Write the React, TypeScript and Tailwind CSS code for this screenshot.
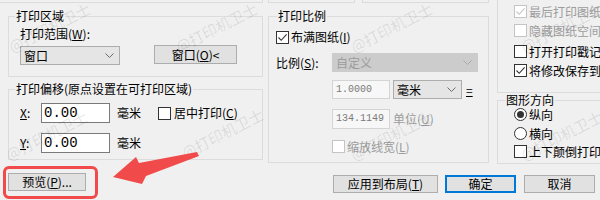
import React from 'react';

const WATERMARKS: [number, number][] = [
  [13, 54], [180, 54], [355, 54], [525, 54],
  [10, 162], [186, 160], [355, 162], [525, 162],
];

function Chevron({ color = '#6b6b6b' }: { color?: string }) {
  return (
    <svg width="9" height="5" viewBox="0 0 9 5" className="shrink-0">
      <path d="M0.5 0.5 L4.5 4.5 L8.5 0.5" fill="none" stroke={color} strokeWidth="1" />
    </svg>
  );
}

function Check({ checked, disabled }: { checked?: boolean; disabled?: boolean }) {
  return (
    <span
      className={`flex h-[13px] w-[13px] shrink-0 items-center justify-center border bg-white ${
        disabled ? 'border-[#c4c4c4]' : 'border-[#333333]'
      }`}
    >
      {checked && (
        <svg width="11" height="11" viewBox="0 0 11 11">
          <path
            d="M1.5 5.5 L4.2 8.3 L9.6 2.4"
            fill="none"
            stroke={disabled ? '#c4c4c4' : '#333333'}
            strokeWidth="1.1"
          />
        </svg>
      )}
    </span>
  );
}

function Radio({ selected }: { selected?: boolean }) {
  return (
    <span className="flex h-[13px] w-[13px] shrink-0 items-center justify-center rounded-full border border-[#333333] bg-white">
      {selected && <span className="h-[7px] w-[7px] rounded-full bg-[#333333]" />}
    </span>
  );
}

function Combo({ text, className, disabled }: { text: string; className: string; disabled?: boolean }) {
  return (
    <div
      className={`flex items-center justify-between border pl-[3px] pr-[5px] ${
        disabled ? 'border-[#cccccc] bg-[#cccccc] text-[#9c9c9c]' : 'border-[#adadad] bg-[#e5e5e5]'
      } ${className}`}
    >
      <span>{text}</span>
      <Chevron color={disabled ? '#a9a9a9' : '#6b6b6b'} />
    </div>
  );
}

function Field({ value, className, disabled }: { value: string; className: string; disabled?: boolean }) {
  return (
    <div
      className={`flex items-center border font-['Liberation_Mono',monospace] ${
        disabled
          ? 'border-[#d4d4d4] bg-[#f7f7f7] pl-[3px] text-[10px] text-[#7a7a7a]'
          : 'border-[#7a7a7a] bg-white pl-[2px] text-[14px]'
      } ${className}`}
    >
      {value}
    </div>
  );
}

export default function App() {
  return (
    <div className="relative h-[200px] w-[600px] overflow-hidden bg-[#f0f0f0] font-['Noto_Sans_CJK_SC','Noto_Sans',sans-serif] text-[12px] leading-[14px] text-black">
      <div className="flex h-[164px]">
        {/* left column */}
        <div className="w-[263px] shrink-0">
          <div className="h-[3px] border-b border-r border-[#dcdcdc]" />

          <fieldset className="ml-2 mt-[6px] h-[68px] border border-[#dcdcdc]">
            <legend className="ml-[6px] px-[1px]">打印区域</legend>
            <div className="pl-[11px] pt-[4px]">
              打印范围(<u>W</u>):
            </div>
            <div className="mt-[4px] flex items-start pl-[11px]">
              <Combo text="窗口" className="mt-[1px] h-[19px] w-[100px]" />
              <button className="ml-[34px] h-[19px] w-[83px] border border-[#adadad] bg-[#e1e1e1]">
                窗口(<u>O</u>)&lt;
              </button>
            </div>
          </fieldset>

          <fieldset className="ml-2 mt-[5px] h-[78px] border border-[#dcdcdc]">
            <legend className="ml-[6px] px-[1px]">打印偏移(原点设置在可打印区域)</legend>
            <div className="mt-[7px] flex h-[20px] items-center pl-[11px]">
              <span className="w-[21px]">
                <u>X</u>:
              </span>
              <Field value="0.00" className="h-[20px] w-[69px]" />
              <span className="ml-[7px]">毫米</span>
              <span className="ml-[17px] flex items-center">
                <Check />
                <span className="ml-[3px]">
                  居中打印(<u>C</u>)
                </span>
              </span>
            </div>
            <div className="mt-[10px] flex h-[20px] items-center pl-[11px]">
              <span className="w-[21px]">
                <u>Y</u>:
              </span>
              <Field value="0.00" className="h-[20px] w-[69px]" />
              <span className="ml-[7px]">毫米</span>
            </div>
          </fieldset>
        </div>

        {/* middle column */}
        <div className="ml-[5px] w-[221px] shrink-0">
          <div className="flex h-[3px]">
            <div className="w-[87px] border-b border-l border-r border-[#dcdcdc]" />
            <div className="ml-[7px] w-[127px] border-b border-l border-r border-[#dcdcdc]" />
          </div>

          <fieldset className="mt-[6px] h-[154px] border border-[#dcdcdc]">
            <legend className="ml-[8px] px-[1px]">打印比例</legend>
            <div className="mt-[7px] flex h-[14px] items-center pl-[7px]">
              <Check checked />
              <span className="ml-[2px]">
                布满图纸(<u>I</u>)
              </span>
            </div>
            <div className="mt-[9px] flex h-[19px] items-center pl-[7px]">
              <span className="w-[56px]">
                比例(<u>S</u>):
              </span>
              <Combo text="自定义" disabled className="h-[19px] w-[146px]" />
            </div>
            <div className="mt-[8px] flex h-[19px] items-center pl-[63px]">
              <Field value="1.0000" disabled className="h-[19px] w-[58px]" />
              <Combo text="毫米" className="ml-[3px] h-[19px] w-[69px]" />
              <span className="ml-[4px] underline">=</span>
            </div>
            <div className="mt-[10px] flex h-[20px] items-center pl-[63px]">
              <Field value="134.1149" disabled className="h-[20px] w-[58px]" />
              <span className="ml-[3px] text-[#9c9c9c]">
                单位(<u>U</u>)
              </span>
            </div>
            <div className="mt-[11px] flex h-[13px] items-center pl-[63px]">
              <Check disabled />
              <span className="ml-[2px] text-[#9c9c9c]">
                缩放线宽(<u>L</u>)
              </span>
            </div>
          </fieldset>
        </div>

        {/* right column */}
        <div className="ml-[8px] w-[110px] shrink-0 whitespace-nowrap">
          <div className="h-[93px] border-b border-l border-r border-[#dcdcdc] pl-[16px] pt-[5px]">
            <div className="flex h-[13px] items-center">
              <Check checked disabled />
              <span className="ml-[2px] text-[#9c9c9c]">最后打印图纸空间</span>
            </div>
            <div className="mt-[6px] flex h-[13px] items-center">
              <Check disabled />
              <span className="ml-[2px] text-[#9c9c9c]">隐藏图纸空间对象</span>
            </div>
            <div className="mt-[8px] flex h-[13px] items-center">
              <Check />
              <span className="ml-[2px]">打开打印戳记</span>
            </div>
            <div className="mt-[6px] flex h-[13px] items-center">
              <Check checked />
              <span className="ml-[2px]">将修改保存到布局</span>
            </div>
          </div>

          <fieldset className="h-[71px] border border-[#dcdcdc]">
            <legend className="ml-[7px] px-[1px]">图形方向</legend>
            <div className="mt-[1px] flex h-[13px] items-center pl-[16px]">
              <Radio selected />
              <span className="ml-[2px]">纵向</span>
            </div>
            <div className="mt-[6px] flex h-[13px] items-center pl-[16px]">
              <Radio />
              <span className="ml-[2px]">横向</span>
            </div>
            <div className="mt-[5px] flex h-[13px] items-center pl-[16px]">
              <Check />
              <span className="ml-[2px]">上下颠倒打印</span>
            </div>
          </fieldset>
        </div>
      </div>

      {/* buttons */}
      <div className="mt-[9px] flex items-start pl-2">
        <button className="h-[18px] w-[78px] border border-[#adadad] bg-[#e1e1e1] leading-[14px]">
          预览(<u>P</u>)...
        </button>
        <button className="ml-[247px] mt-[2px] h-[18px] w-[105px] border border-[#adadad] bg-[#e1e1e1] leading-[14px]">
          应用到布局(<u>T</u>)
        </button>
        <button className="ml-[7px] mt-[2px] h-[18px] w-[71px] border-2 border-[#0078d7] bg-[#e1e1e1] leading-[12px]">
          确定
        </button>
        <button className="ml-[8px] mt-[2px] h-[18px] w-[71px] border border-[#adadad] bg-[#e1e1e1] leading-[14px]">
          取消
        </button>
      </div>

      {/* watermark */}
      {WATERMARKS.map(([x, y], i) => (
        <span
          key={i}
          className="pointer-events-none absolute origin-bottom-left rotate-[-27deg] whitespace-nowrap text-[15px] leading-[15px] text-black/10"
          style={{ left: x, top: y - 15 }}
        >
          @打印机卫士
        </span>
      ))}

      {/* annotation */}
      <div className="pointer-events-none absolute left-[3px] top-[166px] h-[33px] w-[95px] rounded-[6px] border-[3px] border-[#f14a4a]" />
      <svg className="pointer-events-none absolute left-0 top-0" width="600" height="200" viewBox="0 0 600 200">
        <polygon points="113,177 136,157 139,163 197,152 199,156 146,176 142,184" fill="#f14a4a" />
      </svg>
    </div>
  );
}
